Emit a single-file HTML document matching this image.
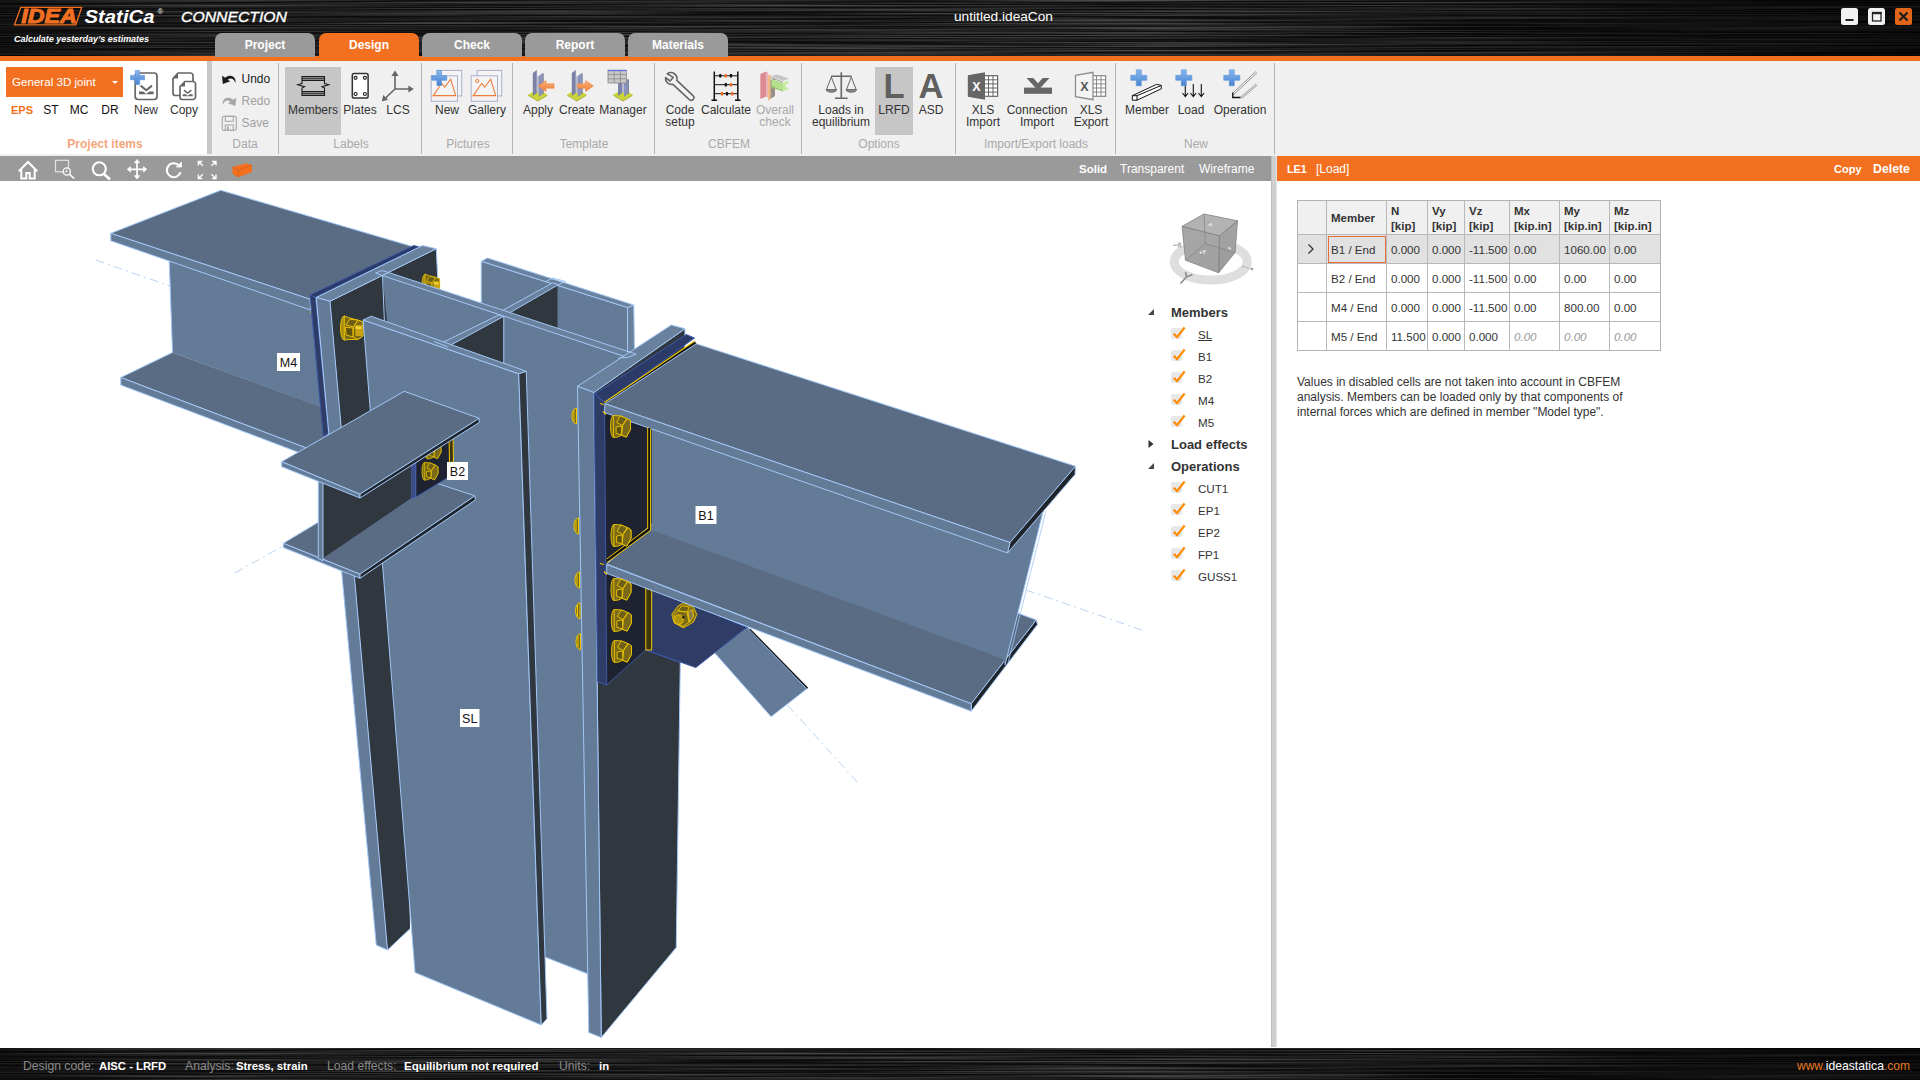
<!DOCTYPE html>
<html><head><meta charset="utf-8"><title>IDEA StatiCa Connection</title>
<style>
*{box-sizing:border-box;margin:0;padding:0}
html,body{width:1920px;height:1080px;overflow:hidden;background:#fff;font-family:"Liberation Sans",sans-serif;font-size:12px;color:#222}
.abs{position:absolute}
#title{position:absolute;left:0;top:0;width:1920px;height:56px;background:#0b0b0b;overflow:hidden}
#oline{position:absolute;left:0;top:55.5px;width:1920px;height:5.5px;background:#f37021}
#ribbon{position:absolute;left:0;top:61px;width:1920px;height:95px;background:#f0f0f0}
.tab{position:absolute;top:33px;height:24px;width:100px;background:#9a9a9a;border-radius:7px 7px 0 0;color:#fff;font-weight:bold;font-size:12px;text-align:center;line-height:24px}
.tab.on{background:#f37021}
.lbl{position:absolute;white-space:nowrap;transform:translateX(-50%);text-align:center;font-size:12px;line-height:12px;color:#333;margin-top:0.6px}
.grp{position:absolute;white-space:nowrap;transform:translateX(-50%);font-size:12px;color:#a9a9a9;top:76px}
.sep{position:absolute;top:2px;width:1px;height:91px;background:#b4b4b4}
#tool{position:absolute;left:0;top:156px;width:1271px;height:25px;background:#9a9a9a}
#status{position:absolute;left:0;top:1048px;width:1920px;height:32px;background:#0b0b0b;overflow:hidden}
#status span{position:absolute;top:11px;font-size:12.2px;white-space:nowrap;line-height:14px}
.g{color:#8a8a8a}.w{color:#fff;font-weight:bold;font-size:11.3px !important}

#split{position:absolute;left:1271px;top:156px;width:6px;height:891px;background:#cfcfcf;border-left:1px solid #bdbdbd;border-right:1px solid #e4e4e4}
#rhead{position:absolute;left:1277px;top:156px;width:643px;height:25px;background:#f37021;color:#fff;font-size:12px;line-height:27px}
#rhead span{position:absolute;top:0;white-space:nowrap}
.tv{position:absolute;top:0;line-height:27px;color:#fff;font-size:12px;white-space:nowrap}
#tbl{position:absolute;left:1297px;top:200px;border-collapse:collapse;outline:1px solid #b4b4b4;outline-offset:-1px;font-size:11.6px;color:#333;table-layout:fixed;width:363px}
#tbl td,#tbl th{border:1px solid #b8b8b8;padding:2px 0 0 4px;text-align:left;white-space:nowrap;overflow:hidden;height:29px;font-weight:normal}
#tbl td{padding-top:1px}
#tbl th{background:#f0f0f0;font-weight:bold;height:34px;line-height:15px;font-size:11.5px;color:#333}
#tbl tr.sel td{background:#e1e1e1}
#tbl td.dis{color:#9a9a9a;font-style:italic}
.tree{position:absolute;white-space:nowrap;font-size:11.6px;color:#333;line-height:14px;margin-top:1px}
.tree.b{font-weight:bold;font-size:13px;color:#333}
.cb{position:absolute;width:11px;height:11px;background:#e7e7e7;border-radius:2px}
</style></head><body>
<!-- TITLE -->
<div id="title">
<svg class="abs" style="left:0;top:0" width="1920" height="56"><defs><filter id="br" x="0" y="0" width="100%" height="100%"><feTurbulence type="fractalNoise" baseFrequency="0.003 1.1" numOctaves="2" seed="3"/><feColorMatrix type="matrix" values="0 0 0 0 0.36  0 0 0 0 0.36  0 0 0 0 0.36  1.0 0 0 0 -0.36"/></filter>
<linearGradient id="tg" x1="0" y1="0" x2="1" y2="0"><stop offset="0" stop-color="#000" stop-opacity="0.55"/><stop offset="0.12" stop-color="#000" stop-opacity="0.15"/><stop offset="0.6" stop-color="#000" stop-opacity="0"/><stop offset="0.85" stop-color="#000" stop-opacity="0.5"/><stop offset="1" stop-color="#000" stop-opacity="0.7"/></linearGradient></defs><rect width="1920" height="56" fill="#0e0e0e"/><rect width="1920" height="56" filter="url(#br)"/><rect width="1920" height="56" fill="url(#tg)"/></svg>
</div>
<div id="oline"></div>
<div class="tab" style="left:215px">Project</div>
<div class="tab on" style="left:319px">Design</div>
<div class="tab" style="left:422px">Check</div>
<div class="tab" style="left:525px">Report</div>
<div class="tab" style="left:628px">Materials</div>
<!-- RIBBON -->
<div id="ribbon">
<div class="abs" style="left:0;top:0;width:207px;height:93px;background:#fff"></div>
<div class="abs" style="left:207px;top:0;width:5px;height:93px;background:#c8c8c8"></div>
<div class="abs" style="left:6px;top:6px;width:117px;height:30px;background:#f37021;color:#fff;font-size:11.6px;line-height:30px;padding-left:6px">General 3D joint</div>
<div class="abs" style="left:112px;top:20px;width:0;height:0;border-left:3px solid transparent;border-right:3px solid transparent;border-top:3px solid #fff"></div>
<div class="lbl" style="left:22px;top:42px;color:#f37021;font-weight:bold;font-size:11px">EPS</div>
<div class="lbl" style="left:51px;top:42px;color:#111">ST</div>
<div class="lbl" style="left:79px;top:42px;color:#111">MC</div>
<div class="lbl" style="left:110px;top:42px;color:#111">DR</div>
<div class="lbl" style="left:146px;top:42px">New</div>
<div class="lbl" style="left:184px;top:42px">Copy</div>
<div class="grp" style="left:105px;color:#f5a57a;font-weight:bold">Project items</div>
<div class="lbl" style="left:241.500px;top:11px;color:#222;transform:none">Undo</div>
<div class="lbl" style="left:241.500px;top:33px;color:#a0a0a0;transform:none">Redo</div>
<div class="lbl" style="left:241.500px;top:55px;color:#a0a0a0;transform:none">Save</div>
<div class="grp" style="left:245px">Data</div>
<div class="sep" style="left:278px"></div>
<div class="abs" style="left:285px;top:6px;width:56px;height:68px;background:#c6c6c6"></div>
<div class="lbl" style="left:313px;top:42px">Members</div>
<div class="lbl" style="left:360px;top:42px">Plates</div>
<div class="lbl" style="left:398px;top:42px">LCS</div>
<div class="grp" style="left:351px">Labels</div>
<div class="sep" style="left:421px"></div>
<div class="lbl" style="left:447px;top:42px">New</div>
<div class="lbl" style="left:487px;top:42px">Gallery</div>
<div class="grp" style="left:468px">Pictures</div>
<div class="sep" style="left:512px"></div>
<div class="lbl" style="left:538px;top:42px">Apply</div>
<div class="lbl" style="left:577px;top:42px">Create</div>
<div class="lbl" style="left:623px;top:42px">Manager</div>
<div class="grp" style="left:584px">Template</div>
<div class="sep" style="left:654px"></div>
<div class="lbl" style="left:680px;top:42px">Code<br>setup</div>
<div class="lbl" style="left:726px;top:42px">Calculate</div>
<div class="lbl" style="left:775px;top:42px;color:#a8a8a8">Overall<br>check</div>
<div class="grp" style="left:729px">CBFEM</div>
<div class="sep" style="left:801px"></div>
<div class="lbl" style="left:841px;top:42px">Loads in<br>equilibrium</div>
<div class="abs" style="left:875px;top:6px;width:38px;height:68px;background:#c6c6c6"></div>
<div class="lbl" style="left:894px;top:42px">LRFD</div>
<div class="lbl" style="left:931px;top:42px">ASD</div>
<div class="grp" style="left:879px">Options</div>
<div class="sep" style="left:955px"></div>
<div class="lbl" style="left:983px;top:42px">XLS<br>Import</div>
<div class="lbl" style="left:1037px;top:42px">Connection<br>Import</div>
<div class="lbl" style="left:1091px;top:42px">XLS<br>Export</div>
<div class="grp" style="left:1036px">Import/Export loads</div>
<div class="sep" style="left:1115px"></div>
<div class="lbl" style="left:1147px;top:42px">Member</div>
<div class="lbl" style="left:1191px;top:42px">Load</div>
<div class="lbl" style="left:1240px;top:42px">Operation</div>
<div class="grp" style="left:1196px">New</div>
<div class="sep" style="left:1274px"></div>
<div class="lbl" style="left:894px;top:9px;font-size:34.5px;font-weight:bold;color:#606060;line-height:30px">L</div>
<div class="lbl" style="left:931px;top:9px;font-size:34.5px;font-weight:bold;color:#606060;line-height:30px">A</div>
<!--RIBICONS-->
</div>
<div id="tool"></div>
<svg class="abs" style="left:0;top:0;pointer-events:none" width="1920" height="182" viewBox="0 0 1920 182"><defs><linearGradient id="bp" x1="0" y1="0" x2="0" y2="1"><stop offset="0" stop-color="#8ab8ee"/><stop offset="1" stop-color="#4783d3"/></linearGradient>
<linearGradient id="og" x1="0" y1="0" x2="0" y2="1"><stop offset="0" stop-color="#f7b078"/><stop offset="1" stop-color="#ef8038"/></linearGradient></defs><polygon points="14.5,24.8 20.8,7.3 81.7,7.3 75.8,24.8" fill="none" stroke="#f37021" stroke-width="1.3"/>
<text x="21.300" y="23.100" font-family="Liberation Sans, sans-serif" font-weight="bold" font-style="italic" font-size="19.5" fill="#f37021" textLength="55.500" lengthAdjust="spacingAndGlyphs" stroke="#f37021" stroke-width="0.9">IDEA</text>
<text x="84.5" y="22.7" font-family="Liberation Sans, sans-serif" font-weight="bold" font-style="italic" font-size="19" fill="#fff" textLength="70" lengthAdjust="spacingAndGlyphs">StatiCa</text>
<text x="157.500" y="13.500" font-family="Liberation Sans, sans-serif" font-size="7.500" fill="#fff">®</text>
<text x="181" y="21.6" font-family="Liberation Sans, sans-serif" font-style="italic" font-size="15.5" fill="#fff" textLength="106" lengthAdjust="spacingAndGlyphs" stroke="#fff" stroke-width="0.35">CONNECTION</text>
<text x="14" y="42" font-family="Liberation Sans, sans-serif" font-weight="bold" font-style="italic" font-size="9.5" fill="#fff" textLength="135" lengthAdjust="spacingAndGlyphs">Calculate yesterday’s estimates</text>
<text x="1003.5" y="20.5" text-anchor="middle" font-family="Liberation Sans, sans-serif" font-size="13" fill="#fff" textLength="99" lengthAdjust="spacingAndGlyphs">untitled.ideaCon</text><rect x="1841" y="8" width="17" height="17" rx="2.5" fill="#f2f2f2"/><rect x="1845.5" y="19" width="8" height="2" fill="#222"/>
<rect x="1868" y="8" width="17" height="17" rx="2.5" fill="#f2f2f2"/><rect x="1872.5" y="12.5" width="8.5" height="8.5" fill="none" stroke="#222" stroke-width="1.3"/><rect x="1872" y="12" width="9.5" height="2.2" fill="#222"/>
<rect x="1895" y="8" width="17" height="17" rx="2.5" fill="#e2661a"/><path d="M1899.5,12.5l8,8M1907.5,12.5l-8,8" stroke="#1a1a1a" stroke-width="2"/><rect x="135.2" y="73" width="21.8" height="26.5" rx="3" fill="#fff" stroke="#666" stroke-width="1.7"/><path d="M140.6,85.6l5.7,4.6l5.7,-4.6" fill="none" stroke="#666" stroke-width="2"/><path d="M139,94.2v-2.6h4.3l3,2.3l3,-2.3h4.3v2.6z" fill="#666"/><path d="M135.3,70.6h4.4v4.8h4.8v4.4h-4.8v4.8h-4.4v-4.8h-4.8v-4.4h4.8z" fill="url(#bp)" stroke="#5b8fd6" stroke-width="0.6"/><path d="M178,73h12.5a2.5,2.5 0 0 1 2.5,2.5v17.5a2.5,2.5 0 0 1 -2.5,2.5h-15a2.5,2.5 0 0 1 -2.5,-2.5v-14.5z" fill="#fff" stroke="#666" stroke-width="1.7"/><path d="M173,78.5h5v-5.5z" fill="#666"/>
<path d="M185,81.5h8a2.5,2.5 0 0 1 2.5,2.5v13a2.5,2.5 0 0 1 -2.5,2.5h-10.500a2.500,2.500 0 0 1 -2.500,-2.500v-10.5z" fill="#fff" stroke="#666" stroke-width="1.7"/><path d="M180,86.500h5v-5z" fill="#666"/>
<path d="M184,90.200l3.700,2.800l3.700,-2.800" fill="none" stroke="#666" stroke-width="1.5"/><path d="M182.700,96.300v-2h3l2,1.500l2,-1.500h3v2z" fill="#666"/><path d="M222,75.800l0.800,8.200l7.500,-2.800l-2.600,-1.500c2.500,-2.200 6,-1.500 7.800,3.300c0.800,-6 -4.500,-9.500 -10.300,-5.300z" fill="#1a1a1a"/>
<path d="M236.200,97.800l-0.800,8.200l-7.500,-2.800l2.600,-1.500c-2.500,-2.200 -6,-1.500 -7.800,3.300c-0.800,-6 4.500,-9.500 10.300,-5.300z" fill="#a6a6a6"/>
<rect x="222.300" y="116.300" width="14" height="14" rx="1.500" fill="none" stroke="#aaa" stroke-width="1.200"/><rect x="225.300" y="116.300" width="8" height="5" fill="none" stroke="#aaa" stroke-width="1.100"/><rect x="225.300" y="125" width="8" height="5.300" fill="none" stroke="#aaa" stroke-width="1.100"/><rect x="227" y="126.500" width="2" height="3" fill="#aaa"/><g stroke="#1c1c1c" fill="none"><path d="M302,76.700h22.500M302,80.300h22.500M302,91.700h22.500M302,95.300h22.500" stroke-width="1.300"/><path d="M302,78.500h22.500M302,93.500h22.500" stroke-width="1.700" stroke="#444"/>
<path d="M302,76v7.500l-4.200,1.300l6.700,1.800l-2.500,1.400v8" stroke-width="1.100"/><path d="M324.500,76v7.500l4.200,1.300l-6.700,1.800l2.500,1.400v8" stroke-width="1.100"/></g><rect x="352.300" y="73.600" width="15.800" height="24.500" rx="1.800" fill="#fff" stroke="#333" stroke-width="1.500"/><g fill="none" stroke="#222" stroke-width="1.150"><circle cx="355.600" cy="77.800" r="1.500"/><circle cx="364.900" cy="77.800" r="1.500"/><circle cx="355.600" cy="94" r="1.500"/><circle cx="364.900" cy="94" r="1.500"/></g><g stroke="#666" stroke-width="1.600" fill="#666"><path d="M395,75v14h14M395,89l-9.500,9" fill="none"/><path d="M395,70.600l-3.600,5.400h7.200zM413.800,89l-5.400,-3.400v6.800zM381.800,101.400l1.400,-6.400l4.800,4.800z" stroke="none"/></g><rect x="437.2" y="70.400" width="24.500" height="25.500" fill="#f4f4f6" stroke="#a9b1c9" stroke-width="1"/><rect x="431.2" y="75.800" width="26.300" height="25.500" fill="#f4f4f6" stroke="#a9b1c9" stroke-width="1"/><path d="M433.2,95.600l8.500,-12.300l3,3.800l6,-8l5,16.500z" fill="none" stroke="#ef7d3a" stroke-width="1.100"/><path d="M436.9,70.5h4.6v5.2h5.2v4.6h-5.2v5.2h-4.6v-5.2h-5.2v-4.6h5.2z" fill="url(#bp)" stroke="#5b8fd6" stroke-width="0.6"/><rect x="477.2" y="70.400" width="24.500" height="25.500" fill="#f4f4f6" stroke="#a9b1c9" stroke-width="1"/><rect x="471.2" y="75.800" width="26.300" height="25.500" fill="#f4f4f6" stroke="#a9b1c9" stroke-width="1"/><path d="M473.2,95.600l8.500,-12.300l3,3.800l6,-8l5,16.500z" fill="none" stroke="#ef7d3a" stroke-width="1.100"/><circle cx="477.2" cy="81" r="1.600" fill="none" stroke="#ef7d3a" stroke-width="1"/><polygon points="528.3,94.500 537.8,89.300 547.3,94.500 537.8,100.300" fill="#cbd533"/><polygon points="528.3,94.500 537.8,100.300 547.3,94.500 547.3,95.700 537.8,101.500 528.3,95.700" fill="#a9b226"/>
<polygon points="532.8,73 536.8,70 536.8,93 532.8,96" fill="#7a82a8"/><polygon points="536.8,75 539.3,77 539.3,94 536.8,92" fill="#b8bcd4"/><polygon points="538.8,76 542.8,73 542.8,94 538.8,97" fill="#8a92b8"/><polygon points="542.8,73 543.5999999999999,73.5 543.5999999999999,93.600 542.8,94" fill="#5f6788"/><path d="M554,83.800v4.400h-8v3.300l-8,-5.500l8,-5.500v3.300z" fill="url(#og)" stroke="#ee8844" stroke-width="0.600"/><polygon points="567.3,94.500 576.8,89.300 586.3,94.500 576.8,100.300" fill="#cbd533"/><polygon points="567.3,94.500 576.8,100.300 586.3,94.500 586.3,95.700 576.8,101.500 567.3,95.700" fill="#a9b226"/>
<polygon points="571.8,73 575.8,70 575.8,93 571.8,96" fill="#7a82a8"/><polygon points="575.8,75 578.3,77 578.3,94 575.8,92" fill="#b8bcd4"/><polygon points="577.8,76 581.8,73 581.8,94 577.8,97" fill="#8a92b8"/><polygon points="581.8,73 582.5999999999999,73.5 582.5999999999999,93.600 581.8,94" fill="#5f6788"/><path d="M577.500,83.800v4.400h8v3.300l8,-5.500l-8,-5.500v3.300z" fill="url(#og)" stroke="#ee8844" stroke-width="0.600"/><polygon points="613.5,94.500 623.0,89.300 632.5,94.500 623.0,100.300" fill="#cbd533"/><polygon points="613.5,94.500 623.0,100.300 632.5,94.500 632.5,95.700 623.0,101.500 613.5,95.700" fill="#a9b226"/>
<polygon points="618.0,79 622.0,76 622.0,93 618.0,96" fill="#7a82a8"/><polygon points="622.0,81 624.5,83 624.5,94 622.0,92" fill="#b8bcd4"/><polygon points="624.0,82 628.0,79 628.0,94 624.0,97" fill="#8a92b8"/><polygon points="628.0,79 628.8,79.5 628.8,93.600 628.0,94" fill="#5f6788"/><rect x="608" y="70.300" width="18.500" height="12.700" fill="#c9c9c9" stroke="#888" stroke-width="0.800"/><path d="M608,74.600h18.500M608,78.800h18.500M614.200,70.300v12.700M620.400,70.300v12.700" stroke="#888" stroke-width="0.800"/><rect x="608" y="69.800" width="18.500" height="1.400" fill="#6a78e0"/><path d="M667.200,73.800a6.200,6.200 0 0 1 9.600,6.600l16.200,15.300a2.600,2.600 0 0 1 -3.600,3.900l-16.500,-15.300a6.200,6.200 0 0 1 -7.400,-6.700l4.600,3.400l3.200,-3.600z" fill="#f4f4f4" stroke="#666" stroke-width="1.600" stroke-linejoin="round"/><g stroke="#111" stroke-width="1.500" fill="none"><path d="M714.300,71.500v28.700M737.800,71.500v28.700M711.500,100.200h5.600M735,100.200h5.600"/><path d="M714.300,75.800h23.500M714.300,84.700h23.500M714.300,93.700h23.500" stroke-width="1"/></g><ellipse cx="720.3" cy="75.8" rx="1.300" ry="2" fill="#111"/><ellipse cx="725.8" cy="75.8" rx="1.300" ry="2" fill="#ee6a1f"/><ellipse cx="731" cy="75.8" rx="1.300" ry="2" fill="#111"/><ellipse cx="725.8" cy="84.7" rx="1.300" ry="2" fill="#111"/><ellipse cx="731" cy="84.7" rx="1.300" ry="2" fill="#ee6a1f"/><ellipse cx="722" cy="93.7" rx="1.300" ry="2" fill="#ee6a1f"/><ellipse cx="727" cy="93.7" rx="1.300" ry="2" fill="#111"/><ellipse cx="732.3" cy="93.7" rx="1.300" ry="2" fill="#ee6a1f"/><polygon points="760.300,74 766.300,71.500 766.300,96.500 760.300,99" fill="#dc8a92"/><polygon points="766.300,71.500 768.300,72.700 768.300,97.700 766.300,96.500" fill="#e8b0b4"/><polygon points="768.300,76 770.500,74.300 770.500,99 768.300,101" fill="#f0b070"/><polygon points="770.500,80 775,78 775,96 770.500,99" fill="#9a8f88"/>
<polygon points="771,76 777,74.500 789,78.500 783,81" fill="#c4c4c4"/><polygon points="771,76.800 783,81.800 783,83 771,78" fill="#a8a8a8"/><polygon points="771.500,79 783,83 783,90 771.500,86" fill="#b4e08c"/><polygon points="783,83 788.500,80.500 788.500,83 786,84.500 786,88 788.500,87 788.500,89 783,91.500" fill="#c6ec9e"/><polygon points="771.500,86 783,90 783,91.500 771.500,87.500" fill="#96c86e"/><g stroke="#666" fill="none" stroke-width="1.600"><path d="M841.300,72.300v25.700M835,98.300h12.600M831,76.300h20.600"/><g stroke-width="1"><path d="M831.300,77l-4.800,12.500M831.300,77l4.800,12.500M851.300,77l-4.800,12.500M851.300,77l4.800,12.500"/><path d="M826,89.600h10.600a5.300,2.600 0 0 1 -10.600,0zM846,89.600h10.600a5.300,2.600 0 0 1 -10.600,0z" fill="#888"/></g></g><rect x="984" y="75.700" width="13.600" height="20.600" fill="#fff" stroke="#666" stroke-width="1.200"/><path d="M984,79.800h13.600M984,83.900h13.600M984,88h13.600M984,92.100h13.600M988.5,75.700v20.600M993,75.700v20.600" stroke="#666" stroke-width="1"/><polygon points="967.800,75.300 985,72.300 985,99.700 967.800,96.700" fill="#666"/><text x="976.300" y="91" text-anchor="middle" font-family="Liberation Sans, sans-serif" font-weight="bold" font-size="12.500" fill="#fff">X</text><rect x="1024" y="87.600" width="28" height="6.200" fill="#666"/><path d="M1026.500,78h6.800l4.700,5.300l4.700,-5.300h6.800l-9.200,9.900h-4.600z" fill="#666"/><rect x="1092" y="75.700" width="13.600" height="20.600" fill="#fff" stroke="#888" stroke-width="1.200"/><path d="M1092,79.800h13.600M1092,83.900h13.600M1092,88h13.600M1092,92.100h13.600M1096.5,75.700v20.600M1101,75.700v20.600" stroke="#888" stroke-width="1"/><polygon points="1075.500,75.300 1093,72.300 1093,99.700 1075.500,96.700" fill="#f4f4f4" stroke="#888" stroke-width="1.200"/><text x="1084.300" y="91" text-anchor="middle" font-family="Liberation Sans, sans-serif" font-weight="bold" font-size="12.500" fill="#555">X</text><path d="M1136.3,69.8h5v5.5h5.5v5h-5.5v5.5h-5v-5.5h-5.5v-5h5.5z" fill="url(#bp)" stroke="#5b8fd6" stroke-width="0.6"/><g fill="#fff" stroke="#111" stroke-width="1"><polygon points="1132.300,95.700 1156.500,84.400 1161.300,85.400 1161.300,88.800 1137,100.200 1132.300,100.200"/><path d="M1132.300,95.700h4.700v4.500M1137,95.700l24.300,-10.300" fill="none"/></g><path d="M1185.3,84v12.300M1182.5,93l2.800,3.500l2.800,-3.500" stroke="#111" stroke-width="1.100" fill="none"/><path d="M1193.3,84v12.300M1190.5,93l2.800,3.500l2.800,-3.500" stroke="#111" stroke-width="1.100" fill="none"/><path d="M1201.3,84v12.300M1198.5,93l2.800,3.500l2.800,-3.500" stroke="#111" stroke-width="1.100" fill="none"/><path d="M1181.3,69.8h5v5.5h5.5v5h-5.5v5.5h-5v-5.5h-5.5v-5h5.5z" fill="url(#bp)" stroke="#5b8fd6" stroke-width="0.6"/><path d="M1232.800,93l23,-21.500M1240.300,97.500l15.800,-13.500M1234,94.300l23,-21.500M1241.500,98.500l15.800,-13.500" stroke="#8c8c8c" stroke-width="0.900"/><path d="M1232.800,92.500v5h7.700" stroke="#111" stroke-width="1.400" fill="none"/><path d="M1229.3,69.8h5v5.5h5.5v5h-5.5v5.5h-5v-5.5h-5.5v-5h5.5z" fill="url(#bp)" stroke="#5b8fd6" stroke-width="0.6"/><g stroke="#fff" fill="none" stroke-width="2" stroke-linejoin="miter"><path d="M18.800,171.300l9.200,-9.300l9.200,9.300"/><path d="M21.300,169.500v9h5v-5.500h3.400v5.500h5v-9"/></g>
<g stroke="#fff" fill="none"><rect x="55.500" y="160.300" width="13" height="11.500" stroke-width="1.200" stroke="#e4e4e4"/><circle cx="66.800" cy="171.500" r="3.600" stroke-width="1.300" fill="#9a9a9a"/><path d="M69.500,174.300l4.800,4.200" stroke-width="1.600"/><path d="M66.800,169.500v2.300h-2" stroke-width="0.900"/></g>
<g stroke="#fff" fill="none" stroke-width="2.100"><circle cx="99.300" cy="168.800" r="6.500"/><path d="M104,174l6,5.500" stroke-width="2.600"/></g>
<g stroke="#fff" fill="#fff" stroke-width="1.700"><path d="M137,161.500v15.500M129.200,169.300h15.500" fill="none"/><path d="M137,159.500l-2.600,3.300h5.200zM137,179l-2.600,-3.300h5.200zM127.200,169.300l3.300,-2.600v5.200zM146.800,169.300l-3.300,-2.600v5.200z" stroke-width="0.800"/></g>
<g stroke="#fff" fill="none" stroke-width="2.100"><path d="M178.500,165a7,7 0 1 0 2,7.300"/><path d="M181.500,162v5h-5z" fill="#fff" stroke-width="0.800"/></g>
<g stroke="#fff" fill="none" stroke-width="1.300"><path d="M198.300,165.500v-4h4M198.300,161.500l4.600,4.300M216,165.500v-4h-4M216,161.500l-4.600,4.300M198.300,174.500v4h4M198.300,178.500l4.600,-4.300M216,174.500v4h-4M216,178.500l-4.600,-4.300"/></g>
<polygon points="232.500,167 246,163.300 252,165.300 252,172 238.300,177.300 232.500,174" fill="#f37021"/><path d="M232.500,167l5.800,3l13.700,-4.700M238.300,170v7.300" stroke="#d85e14" stroke-width="0.800" fill="none"/></svg>

<!--MODEL--><svg class="abs" id="model" style="left:0;top:181px" width="1270" height="866" viewBox="0 181 1270 866"><defs>
<g id="bolt" stroke="#f0c800" stroke-width="0.9" stroke-linejoin="round">
<ellipse cx="-7.1" cy="0" rx="2.9" ry="11" fill="#7a6a18"/>
<polygon points="-7.1,-11 -0.2,-10.6 6.3,-7.9 10,-5.6 10,2.8 5.8,10.6 1.2,8.8 -3,10.600 -7.100,11" fill="#7a6a18"/>
<polygon points="-3.900,-4.200 -0.200,-10.600 6.300,-7.900 1.700,-0.900" fill="#6e5e16"/>
<polygon points="-4.400,0.500 1.200,-0.500 1.200,8.300 -4.400,6.900" fill="#5e5210"/>
<polygon points="2.100,-0.900 6.800,-7.900 10,-5.600 10,2.800 5.800,10.600 1.200,8.800" fill="#7a6a18"/>
</g>
<g id="bend" stroke="#f0c800" stroke-width="1"><path d="M3,-8 a4.500,8 0 0 0 0,16z" fill="#7a6a18"/><path d="M0.500,-6v12" fill="none"/></g>
<g id="snut" stroke="#f0c800" stroke-width="0.9" stroke-linejoin="round">
<ellipse cx="-7.600" cy="0" rx="3.800" ry="12" fill="#a88c10"/>
<polygon points="-7.600,-12 -2,-10 6.100,-7.800 11,-6 11,8 6,11.500 -3,11.500 -7.600,12" fill="#7a6a18"/>
<polygon points="-5.800,-3 -2.100,-8.900 6.100,-7.800 1.600,-1.100" fill="#6e5e16"/>
<polygon points="-6.500,-0.700 0.900,0 1.200,8.900 -5.800,7" fill="#5e5210"/>
<polygon points="1.600,-1.100 6.100,-7.800 11,-6 11,8 6,11.500 1.200,8.900" fill="#7a6a18"/>
<rect x="3.500" y="-3" width="7.500" height="11" fill="#c9a410" stroke="none"/><rect x="3.500" y="-1.500" width="6" height="2.500" fill="#f5d838" stroke="none"/>
</g>
<g id="nut" stroke="#f0c800" stroke-width="0.9" stroke-linejoin="round">
<polygon points="-12.2,-0.8 -6.2,-9.2 -0.6,-12.4 9.5,-8.2 12.8,-0.8 9.5,6.6 -0.6,12.6 -9.900,7.500" fill="#7a6a18"/>
<polygon points="-6.200,-4.500 -2,-9.600 5.400,-8.200 3.100,-3.100" fill="#6e5e16"/>
<polygon points="4,-3.100 8.600,-5.900 9.500,1 5.400,7" fill="#8a7a4a"/>
<polygon points="-9.900,-0.800 -6.200,-4.500 3.100,-3.100 4.900,6.600 -0.600,11.200 -9,7.500" fill="#7a6a18"/>
<circle cx="-5.300" cy="4.300" r="4.700" fill="#b09410"/><circle cx="-0.600" cy="1.900" r="1.200" fill="#1a1a10" stroke="none"/>
</g>
</defs>
<line x1="95.8" y1="260" x2="170" y2="286" stroke="#b9d3ef" stroke-width="1" stroke-dasharray="9 4 2 4"/>
<line x1="235" y1="573" x2="290" y2="542" stroke="#b9d3ef" stroke-width="1" stroke-dasharray="9 4 2 4"/>
<line x1="1026" y1="590" x2="1146" y2="631.5" stroke="#b9d3ef" stroke-width="1" stroke-dasharray="9 4 2 4"/>
<line x1="787.5" y1="705" x2="858" y2="783" stroke="#b9d3ef" stroke-width="1" stroke-dasharray="9 4 2 4"/>
<polygon points="481.25,261.25 627.5,307.5 627.5,356 481.25,306" fill="#647b98" stroke="#a2c7f6" stroke-width="1" stroke-linejoin="round"/>
<polygon points="627.5,307.5 633.75,305 634.5,352 627.5,356" fill="#6a819d" stroke="#a2c7f6" stroke-width="1" stroke-linejoin="round"/>
<polygon points="481.25,261.25 487.5,258 633.75,305 627.5,307.5" fill="#6a819d" stroke="#a2c7f6" stroke-width="1" stroke-linejoin="round"/>
<polygon points="505,314.5 557.5,285 557.5,340 505,340" fill="#31373f"/>
<polygon points="497,313.5 552.5,283 558.75,284.5 503.75,316.25" fill="#6a819d" stroke="#a2c7f6" stroke-width="1" stroke-linejoin="round"/>
<polyline points="546,281.5 553,278 565.5,281.5 558.75,284.5" fill="none" stroke="#a2c7f6" stroke-width="1"/>
<polygon points="120.8,377.5 172.5,352.5 330,410 330,456 320,453.2" fill="#5a6b84"/>
<polyline points="172.5,352.5 120.8,377.5 320,453.2" fill="none" stroke="#a2c7f6" stroke-width="1"/>
<polygon points="120.8,377.5 320,453.2 320,460.5 120.8,385" fill="#647b98" stroke="#a2c7f6" stroke-width="1" stroke-linejoin="round"/>
<polygon points="169.2,255 315,300 322,407.5 172.5,352.5" fill="#647b98"/>
<polyline points="169.2,261.7 172.5,352.5" fill="none" stroke="#a2c7f6" stroke-width="1"/>
<polygon points="110.8,233.3 220.8,190.3 414,247 310,299.2" fill="#5a6b84" stroke="#a2c7f6" stroke-width="1" stroke-linejoin="round"/>
<polygon points="110.8,233.3 310,299.2 310.5,310 110.8,240.8" fill="#647b98" stroke="#a2c7f6" stroke-width="1" stroke-linejoin="round"/>
<polyline points="310,300 311.5,301.5" fill="none" stroke="#f0c800" stroke-width="1.3"/>
<polyline points="310.5,307 313.5,307.3" fill="none" stroke="#f0c800" stroke-width="1.3"/>
<polyline points="310.5,311.5 311.5,313" fill="none" stroke="#f0c800" stroke-width="1.3"/>
<polygon points="310,295 315.5,297.3 328.3,433 323.3,436.7" fill="#2f3c66" stroke="#3c59a6" stroke-width="1" stroke-linejoin="round"/>
<polygon points="310,295 413.75,245.6 419.4,246.9 315.5,297.3" fill="#2c3a68" stroke="#3c59a6" stroke-width="1" stroke-linejoin="round"/>
<polygon points="330,301.25 436.25,248.75 438.5,292 400,322 410,928.75 387.5,950" fill="#31373f"/>
<polyline points="330,301.25 436.25,248.75 438.3,290" fill="none" stroke="#a2c7f6" stroke-width="1"/>
<polygon points="316.25,297.5 422.5,245.6 436.25,248.75 330,301.25" fill="#6a819d" stroke="#a2c7f6" stroke-width="1" stroke-linejoin="round"/>
<polygon points="316.25,297.5 330,301.25 387.5,950 376.25,945" fill="#647b98" stroke="#a2c7f6" stroke-width="1" stroke-linejoin="round"/>
<polyline points="387.5,950 410,928.75" fill="none" stroke="#a2c7f6" stroke-width="1"/>
<use href="#snut" transform="translate(351.900,328)"/>
<use href="#snut" transform="translate(431,283.500) scale(0.780)"/>
<polygon points="382.5,275.6 627.5,357.5 627.5,600 595,700 595,976.7 445,917.6" fill="#647b98"/>
<polygon points="382.5,275.6 388.75,272.5 636.25,354.25 627.5,357.5" fill="#6a819d" stroke="#a2c7f6" stroke-width="1" stroke-linejoin="round"/>
<polyline points="375.6,273.1 381.9,270.6 388.75,272.5" fill="none" stroke="#a2c7f6" stroke-width="1"/>
<polyline points="375.6,273.1 382.5,275.6" fill="none" stroke="#a2c7f6" stroke-width="1"/>
<polyline points="382.5,275.6 384.4,321" fill="none" stroke="#a2c7f6" stroke-width="1"/>
<polyline points="546.25,957.5 587.5,973.75" fill="none" stroke="#a2c7f6" stroke-width="1"/>
<use href="#bend" transform="translate(573.5,416)"/>
<use href="#bend" transform="translate(575.5,526)"/>
<use href="#bend" transform="translate(576.5,580)"/>
<use href="#bend" transform="translate(577,610.8)"/>
<use href="#bend" transform="translate(577.5,641.7)"/>
<polygon points="447.5,345 503.75,316.25 503.75,375 447.5,362" fill="#31373f"/>
<polygon points="440,343.75 498.75,315 503.75,316.25 447.5,346.9" fill="#6a819d" stroke="#a2c7f6" stroke-width="1" stroke-linejoin="round"/>
<polyline points="503.75,316.25 503.75,363" fill="none" stroke="#a2c7f6" stroke-width="1"/>
<polygon points="363.1,320 518.75,373.75 541.25,1025 415,972.5" fill="#647b98" stroke="#a2c7f6" stroke-width="1" stroke-linejoin="round"/>
<polygon points="518.75,373.75 526.25,371.25 547,1018.75 541.25,1025" fill="#31373f" stroke="#a2c7f6" stroke-width="1" stroke-linejoin="round"/>
<polygon points="363.1,320 371.25,316.25 526.25,371.25 518.75,373.75" fill="#6a819d" stroke="#a2c7f6" stroke-width="1" stroke-linejoin="round"/>
<polyline points="440,343.75 447.5,346.9" fill="none" stroke="#a2c7f6" stroke-width="1"/>
<polyline points="434,341.5 440,343.75" fill="none" stroke="#a2c7f6" stroke-width="1"/>
<polygon points="593.75,392.5 685,328.75 676.25,947.5 601.25,1037.5" fill="#31373f" stroke="#a2c7f6" stroke-width="1" stroke-linejoin="round"/>
<polygon points="577.5,386.25 671.25,325 685,328.75 593.75,392.5" fill="#6a819d" stroke="#a2c7f6" stroke-width="1" stroke-linejoin="round"/>
<polygon points="577.5,386.25 593.75,392.5 601.25,1037.5 588.75,1032.5" fill="#647b98" stroke="#a2c7f6" stroke-width="1" stroke-linejoin="round"/>
<polyline points="618,358 627.5,357.5 636.25,354.25 628,351.5" fill="none" stroke="#a2c7f6" stroke-width="1"/>
<polygon points="604.5,402.5 692,343 692,600 645.8,650 606.7,685" fill="#1f2331"/>
<polygon points="594,393 604.5,402.5 606.7,685 597.5,681.7" fill="#2f3c66" stroke="#3c59a6" stroke-width="1" stroke-linejoin="round"/>
<polygon points="595,393.75 686.25,334.5 694.5,338 605,402.5" fill="#2c3a68" stroke="#3c59a6" stroke-width="1" stroke-linejoin="round"/>
<polyline points="606.7,685 645.8,650 680,662.5" fill="none" stroke="#3c59a6" stroke-width="1"/>
<polyline points="605.3,404.3 695.8,342.7" fill="none" stroke="#15130a" stroke-width="3.6"/>
<polyline points="604.3,402.6 694.8,341" fill="none" stroke="#f0c800" stroke-width="1.2"/>
<polyline points="606.4,406 696.8,344.6" fill="none" stroke="#f0c800" stroke-width="1.2"/>
<polygon points="712,650 745,624 806.7,688.9 771.1,716.7" fill="#647b98"/>
<polyline points="715.6,653.9 771.1,716.7 806.7,688.9" fill="none" stroke="#a2c7f6" stroke-width="1"/>
<polyline points="749.8,629.3 807.6,688.3" fill="none" stroke="#1a1d22" stroke-width="1.9"/>
<polyline points="747.8,628.3 806.7,688.9" fill="none" stroke="#a2c7f6" stroke-width="0.8"/>
<polygon points="651.7,588 746.7,627.5 695.8,667.5 645.8,650 651.7,645" fill="#2f3c66" stroke="#3c59a6" stroke-width="1" stroke-linejoin="round"/>
<polygon points="645.8,588.3 651.7,590 651.7,650 645.8,650" fill="#3d360e" stroke="#f0c800" stroke-width="1" stroke-linejoin="round"/>
<use href="#nut" transform="translate(684,615.300)"/>
<polygon points="606.7,564 971.25,703.75 1036.25,620 690,490" fill="#5a6b84" stroke="#a2c7f6" stroke-width="1" stroke-linejoin="round"/>
<polygon points="971.25,703.75 1036.25,620 1037.5,624.5 971.25,711.25" fill="#20242b" stroke="#a2c7f6" stroke-width="1" stroke-linejoin="round"/>
<polygon points="606.7,564.5 971.25,703.75 971.25,711.25 606.7,573.3" fill="#647b98" stroke="#a2c7f6" stroke-width="1" stroke-linejoin="round"/>
<polygon points="651.7,426 1043.75,505 1043.75,508.75 1005,665 1002.5,658.75 651.7,530" fill="#647b98"/>
<polyline points="1043.75,508.75 1005,665" fill="none" stroke="#a2c7f6" stroke-width="1"/>
<polyline points="1046,511 1008,663" fill="none" stroke="#a2c7f6" stroke-width="0.8"/>
<polygon points="605,403.75 696.25,343.75 1075.5,466.25 1010,542.5" fill="#5a6b84" stroke="#a2c7f6" stroke-width="1" stroke-linejoin="round"/>
<polygon points="1010,542.5 1075.5,466.25 1075,474.5 1007.5,553" fill="#20242b" stroke="#a2c7f6" stroke-width="1" stroke-linejoin="round"/>
<polygon points="605,403.75 1010,542.5 1007.5,553 604.5,412.5" fill="#647b98" stroke="#a2c7f6" stroke-width="1" stroke-linejoin="round"/>
<polyline points="649,428 649,529 607,560.5" fill="none" stroke="#111" stroke-width="3"/>
<polyline points="647.7,427.6 647.7,528.3 606.7,559" fill="none" stroke="#f0c800" stroke-width="1"/>
<polyline points="650.6,429 650.6,530.5 607,562.5" fill="none" stroke="#f0c800" stroke-width="1"/>
<polyline points="600,403.5 604,404.5" fill="none" stroke="#f0c800" stroke-width="1.2"/>
<polyline points="603,411.5 606,414.5" fill="none" stroke="#f0c800" stroke-width="1.2"/>
<polyline points="600,563.5 604,564.5" fill="none" stroke="#f0c800" stroke-width="1.2"/>
<polyline points="604,571.5 607,574.5" fill="none" stroke="#f0c800" stroke-width="1.2"/>
<use href="#bolt" transform="translate(620.5,426.5) scale(1.0)"/>
<use href="#bolt" transform="translate(621,535.5) scale(1.0)"/>
<use href="#bolt" transform="translate(621,589.5) scale(1.0)"/>
<use href="#bolt" transform="translate(621.3,620.5) scale(1.0)"/>
<use href="#bolt" transform="translate(621.5,651.5) scale(1.0)"/>
<polygon points="283.3,543.3 402,472 475,495.8 360,574.2" fill="#5a6b84" stroke="#a2c7f6" stroke-width="1" stroke-linejoin="round"/>
<polygon points="283.3,543.3 360,574.2 360,578.3 283.3,547.5" fill="#647b98" stroke="#a2c7f6" stroke-width="1" stroke-linejoin="round"/>
<polygon points="360,574.2 475,495.8 475.3,500 360,578.3" fill="#20242b" stroke="#a2c7f6" stroke-width="1" stroke-linejoin="round"/>
<polygon points="415.8,436 452,436 452,475 415.8,497" fill="#1f2331"/>
<polygon points="410.8,436 415.8,436 415.8,497.5 410.8,498.5" fill="#3b4c86" stroke="#4a63b4" stroke-width="1" stroke-linejoin="round"/>
<polyline points="415.8,497 446.7,478.3" fill="none" stroke="#3c59a6" stroke-width="1"/>
<polygon points="449,436 453,436 453.5,461.7 449.5,463" fill="#3d360e" stroke="#f0c800" stroke-width="1" stroke-linejoin="round"/>
<use href="#bolt" transform="translate(430,471.3) scale(0.8)"/>
<use href="#bolt" transform="translate(433,450) scale(0.8)"/>
<polygon points="323,475 411,436 411,498.3 323,558.3" fill="#31373f"/>
<polygon points="318.3,479 323,481.7 323,560.8 318.3,558.5" fill="#647b98" stroke="#a2c7f6" stroke-width="1" stroke-linejoin="round"/>
<polygon points="281.7,461.7 404.2,391.3 479.2,418.3 360,494.2" fill="#5a6b84" stroke="#a2c7f6" stroke-width="1" stroke-linejoin="round"/>
<polygon points="281.7,461.7 360,494.2 360,498 281.7,466.7" fill="#647b98" stroke="#a2c7f6" stroke-width="1" stroke-linejoin="round"/>
<polygon points="360,494.2 479.2,418.3 479.2,422.5 360,498" fill="#20242b" stroke="#a2c7f6" stroke-width="1" stroke-linejoin="round"/>
<ellipse cx="1210.8" cy="261.800" rx="36.500" ry="18.300" fill="none" stroke="#dedede" stroke-width="9"/>
<polygon points="1205.400,243.600 1235.100,252.400 1218.600,272.800 1185.500,260.200" fill="#9c9c9c"/>
<polygon points="1204,214 1237.500,220.800 1235.100,252.400 1205.400,243.600" fill="#a6a6a6" fill-opacity="0.850"/>
<polygon points="1182.100,226.300 1204,214 1205.400,243.600 1185.500,260.200" fill="#a2a2a2" fill-opacity="0.850"/>
<polygon points="1182.100,226.300 1219.500,235.900 1218.600,272.800 1185.500,260.200" fill="#a4a4a4" fill-opacity="0.800"/>
<polygon points="1219.500,235.900 1237.500,220.800 1235.100,252.400 1218.600,272.800" fill="#9e9e9e" fill-opacity="0.800"/>
<polygon points="1182.100,226.300 1204,214 1237.500,220.800 1219.500,235.900" fill="#b2b2b2" fill-opacity="0.900"/>
<g fill="none" stroke="#868686" stroke-width="0.800"><polygon points="1182.100,226.300 1204,214 1237.500,220.800 1219.500,235.900"/><polygon points="1182.100,226.300 1219.500,235.900 1218.600,272.800 1185.500,260.200"/><polygon points="1219.500,235.900 1237.500,220.800 1235.100,252.400 1218.600,272.800"/><path d="M1204,214L1205.400,243.600L1185.500,260.200M1205.400,243.600L1235.100,252.400"/></g>
<g font-family="Liberation Sans, sans-serif" fill="#fff" font-weight="bold"><text x="1199" y="254" font-size="5.500">+Y</text><text x="1226" y="249" font-size="5" transform="rotate(-60 1229 246)">z</text><text x="1208" y="226" font-size="5" transform="rotate(15 1210 224)">-z</text></g>
<g fill="none" stroke="#8c8c8c" stroke-width="1.600"><path d="M1180.500,283.500l6,-6.500l6,-2.500M1186.500,277l-1,-5"/></g>
<g fill="none" stroke="#9a9a9a" stroke-width="0.900"><path d="M1173,245.500l7.500,-1M1178.500,242l2.500,6M1181,242.500l-3,5" /><path d="M1242.500,266.500l9,2.500" stroke-dasharray="2.500 1.500"/><path d="M1251,268.500l2,1" stroke-width="2"/></g>
<rect x="277" y="353" width="23" height="18" fill="#fff"/><text x="288.5" y="366.8" text-anchor="middle" font-family="Liberation Sans, sans-serif" font-size="12.5" fill="#111">M4</text>
<rect x="447" y="462" width="21" height="18" fill="#fff"/><text x="457.5" y="475.8" text-anchor="middle" font-family="Liberation Sans, sans-serif" font-size="12.5" fill="#111">B2</text>
<rect x="695.5" y="506" width="21.0" height="18" fill="#fff"/><text x="706.0" y="519.8" text-anchor="middle" font-family="Liberation Sans, sans-serif" font-size="12.5" fill="#111">B1</text>
<rect x="460" y="709" width="19.5" height="18" fill="#fff"/><text x="469.75" y="722.8" text-anchor="middle" font-family="Liberation Sans, sans-serif" font-size="12.5" fill="#111">SL</text></svg><!--/MODEL-->
<div id="split"></div>
<div class="abs" style="left:1277px;top:181px;width:643px;height:866px;background:#fff"></div>
<div id="rhead"><span style="left:10px;font-weight:bold;font-size:10.8px">LE1</span><span style="left:39px">[Load]</span><span style="left:557px;font-weight:bold;font-size:11px">Copy</span><span style="left:596px;font-weight:bold;font-size:12.3px">Delete</span></div>
<div class="tv" style="left:1079px;top:156px;font-weight:bold;font-size:11.5px">Solid</div>
<div class="tv" style="left:1120px;top:156px">Transparent</div>
<div class="tv" style="left:1199px;top:156px">Wireframe</div>
<table id="tbl"><colgroup><col style="width:29px"><col style="width:60px"><col style="width:41px"><col style="width:37px"><col style="width:45px"><col style="width:50px"><col style="width:50px"><col style="width:51px"></colgroup>
<tr><th></th><th>Member</th><th>N<br>[kip]</th><th>Vy<br>[kip]</th><th>Vz<br>[kip]</th><th>Mx<br>[kip.in]</th><th>My<br>[kip.in]</th><th>Mz<br>[kip.in]</th></tr>
<tr class="sel"><td style="background:#e1e1e1"></td><td style="outline:1.500px solid #e8703a;outline-offset:-2px">B1 / End</td><td>0.000</td><td>0.000</td><td>-11.500</td><td>0.00</td><td>1060.00</td><td>0.00</td></tr>
<tr><td></td><td>B2 / End</td><td>0.000</td><td>0.000</td><td>-11.500</td><td>0.00</td><td>0.00</td><td>0.00</td></tr>
<tr><td></td><td>M4 / End</td><td>0.000</td><td>0.000</td><td>-11.500</td><td>0.00</td><td>800.00</td><td>0.00</td></tr>
<tr><td></td><td>M5 / End</td><td>11.500</td><td>0.000</td><td>0.000</td><td class="dis">0.00</td><td class="dis">0.00</td><td class="dis">0.00</td></tr>
</table>
<svg class="abs" style="left:1305px;top:243px" width="12" height="12"><path d="M3.500,1.500l4.500,4.500l-4.500,4.500" fill="none" stroke="#333" stroke-width="1.300"/></svg>
<div class="abs" style="left:1297px;top:375px;width:340px;font-size:12px;line-height:15px;color:#333">Values in disabled cells are not taken into account in CBFEM<br>analysis. Members can be loaded only by that components of<br>internal forces which are defined in member "Model type".</div>
<svg class="abs" style="left:1146px;top:307px" width="10" height="10"><path d="M8,2v6h-6z" fill="#444"/></svg><div class="tree b" style="left:1171px;top:305px">Members</div><div class="cb" style="left:1171px;top:328px"></div><svg class="abs" style="left:1171px;top:324px" width="16" height="16"><path d="M2.750,9.750l3.350,3.350l7.500,-9.600" fill="none" stroke="#ff8a00" stroke-width="2.200"/></svg><div class="tree" style="left:1198px;top:327px"><span style="text-decoration:underline">SL</span></div><div class="cb" style="left:1171px;top:350px"></div><svg class="abs" style="left:1171px;top:346px" width="16" height="16"><path d="M2.750,9.750l3.350,3.350l7.500,-9.600" fill="none" stroke="#ff8a00" stroke-width="2.200"/></svg><div class="tree" style="left:1198px;top:349px"><span>B1</span></div><div class="cb" style="left:1171px;top:372px"></div><svg class="abs" style="left:1171px;top:368px" width="16" height="16"><path d="M2.750,9.750l3.350,3.350l7.500,-9.600" fill="none" stroke="#ff8a00" stroke-width="2.200"/></svg><div class="tree" style="left:1198px;top:371px"><span>B2</span></div><div class="cb" style="left:1171px;top:394px"></div><svg class="abs" style="left:1171px;top:390px" width="16" height="16"><path d="M2.750,9.750l3.350,3.350l7.500,-9.600" fill="none" stroke="#ff8a00" stroke-width="2.200"/></svg><div class="tree" style="left:1198px;top:393px"><span>M4</span></div><div class="cb" style="left:1171px;top:416px"></div><svg class="abs" style="left:1171px;top:412px" width="16" height="16"><path d="M2.750,9.750l3.350,3.350l7.500,-9.600" fill="none" stroke="#ff8a00" stroke-width="2.200"/></svg><div class="tree" style="left:1198px;top:415px"><span>M5</span></div><svg class="abs" style="left:1146px;top:439px" width="10" height="10"><path d="M2.500,1l5,4l-5,4z" fill="#333"/></svg><div class="tree b" style="left:1171px;top:437px">Load effects</div><svg class="abs" style="left:1146px;top:461px" width="10" height="10"><path d="M8,2v6h-6z" fill="#444"/></svg><div class="tree b" style="left:1171px;top:459px">Operations</div><div class="cb" style="left:1171px;top:482px"></div><svg class="abs" style="left:1171px;top:478px" width="16" height="16"><path d="M2.750,9.750l3.350,3.350l7.500,-9.600" fill="none" stroke="#ff8a00" stroke-width="2.200"/></svg><div class="tree" style="left:1198px;top:481px">CUT1</div><div class="cb" style="left:1171px;top:504px"></div><svg class="abs" style="left:1171px;top:500px" width="16" height="16"><path d="M2.750,9.750l3.350,3.350l7.500,-9.600" fill="none" stroke="#ff8a00" stroke-width="2.200"/></svg><div class="tree" style="left:1198px;top:503px">EP1</div><div class="cb" style="left:1171px;top:526px"></div><svg class="abs" style="left:1171px;top:522px" width="16" height="16"><path d="M2.750,9.750l3.350,3.350l7.500,-9.600" fill="none" stroke="#ff8a00" stroke-width="2.200"/></svg><div class="tree" style="left:1198px;top:525px">EP2</div><div class="cb" style="left:1171px;top:548px"></div><svg class="abs" style="left:1171px;top:544px" width="16" height="16"><path d="M2.750,9.750l3.350,3.350l7.500,-9.600" fill="none" stroke="#ff8a00" stroke-width="2.200"/></svg><div class="tree" style="left:1198px;top:547px">FP1</div><div class="cb" style="left:1171px;top:570px"></div><svg class="abs" style="left:1171px;top:566px" width="16" height="16"><path d="M2.750,9.750l3.350,3.350l7.500,-9.600" fill="none" stroke="#ff8a00" stroke-width="2.200"/></svg><div class="tree" style="left:1198px;top:569px">GUSS1</div>

<!-- STATUS -->
<div id="status">
<svg class="abs" style="left:0;top:0" width="1920" height="33"><rect width="1920" height="33" fill="#0c0c0c"/><rect width="1920" height="33" filter="url(#br)"/><rect width="1920" height="33" fill="url(#tg)"/></svg>
<span class="g" style="left:23px">Design code:</span><span class="w" style="left:99px">AISC - LRFD</span>
<span class="g" style="left:185px">Analysis:</span><span class="w" style="left:236px">Stress, strain</span>
<span class="g" style="left:327px">Load effects:</span><span class="w" style="left:404px;font-size:11.600px !important">Equilibrium not required</span>
<span class="g" style="left:559px">Units:</span><span class="w" style="left:599px">in</span>
<span style="left:1797px;color:#e87722;font-size:12px">www.<span style="position:static;color:#fff">ideastatica</span>.com</span>
</div>
</body></html>
